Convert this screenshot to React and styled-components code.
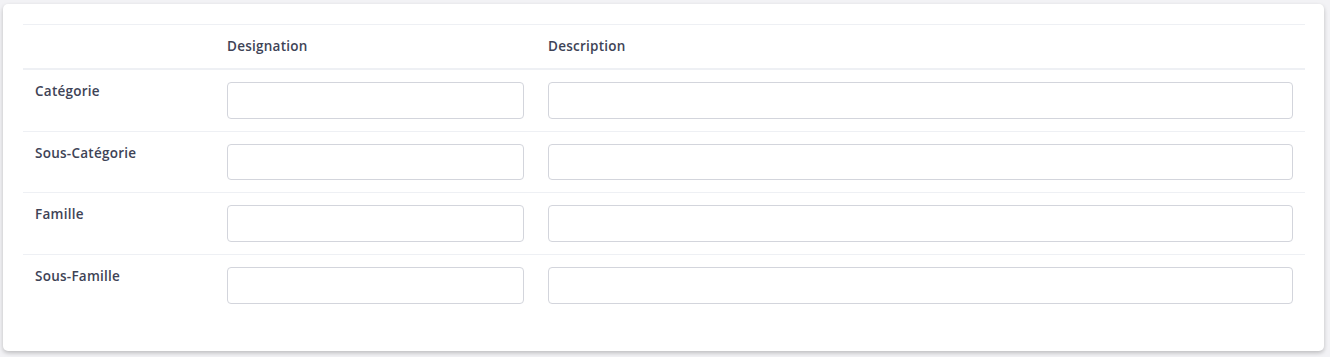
import React from "react";
import styled, { createGlobalStyle } from "styled-components";

const rows = ["Catégorie", "Sous-Catégorie", "Famille", "Sous-Famille"];

const App = () => {
  return (
    <Page>
      <GlobalStyle />
      <Card>
        <Table>
          <colgroup>
            <col style={{ width: 192 }} />
            <col style={{ width: 321 }} />
            <col />
          </colgroup>
          <thead>
            <tr>
              <Th />
              <Th>Designation</Th>
              <Th>Description</Th>
            </tr>
          </thead>
          <tbody>
            {rows.map((label, i) => (
              <Row key={label} last={i === rows.length - 1}>
                <Label>{label}</Label>
                <Td>
                  <Input type="text" />
                </Td>
                <Td>
                  <Input type="text" />
                </Td>
              </Row>
            ))}
          </tbody>
        </Table>
      </Card>
    </Page>
  );
};

const GlobalStyle = createGlobalStyle`
  body {
    margin: 0;
    background: #f2f2f5;
    font-family: "Open Sans", "Liberation Sans", sans-serif;
  }
`;

const Page = styled.div`
  padding: 4px 6px 7px 3px;
`;

const Card = styled.div`
  background: #fff;
  border-radius: 5px;
  box-shadow: 0 2px 4px rgba(0, 0, 0, 0.22);
  padding: 20px 19px 35px 20px;
`;

const Table = styled.table`
  width: 100%;
  border-collapse: collapse;
  table-layout: fixed;
`;

const Th = styled.th`
  text-align: left;
  padding: 11px 12px 12px;
  height: 20px;
  font-size: 13.5px;
  font-weight: 600;
  letter-spacing: 0.25px;
  color: #3e4356;
  border-top: 1px solid #eef0f4;
  border-bottom: 2px solid #eef0f4;
  line-height: 20px;
`;

const Row = styled.tr`
  border-bottom: ${(p) => (p.last ? "none" : "1px solid #eef0f4")};
`;

const Td = styled.td`
  padding: 12px;
  vertical-align: top;
`;

const Label = styled(Td)`
  padding-top: 11px;
  font-size: 13.5px;
  font-weight: 600;
  letter-spacing: 0.25px;
  color: #3e4356;
  line-height: 20px;
`;

const Input = styled.input`
  display: block;
  box-sizing: border-box;
  width: 100%;
  height: 36.67px;
  margin: 0;
  border: 1px solid #d3d5dc;
  border-radius: 4px;
  background: #fff;
  outline: none;
`;

export default App;
